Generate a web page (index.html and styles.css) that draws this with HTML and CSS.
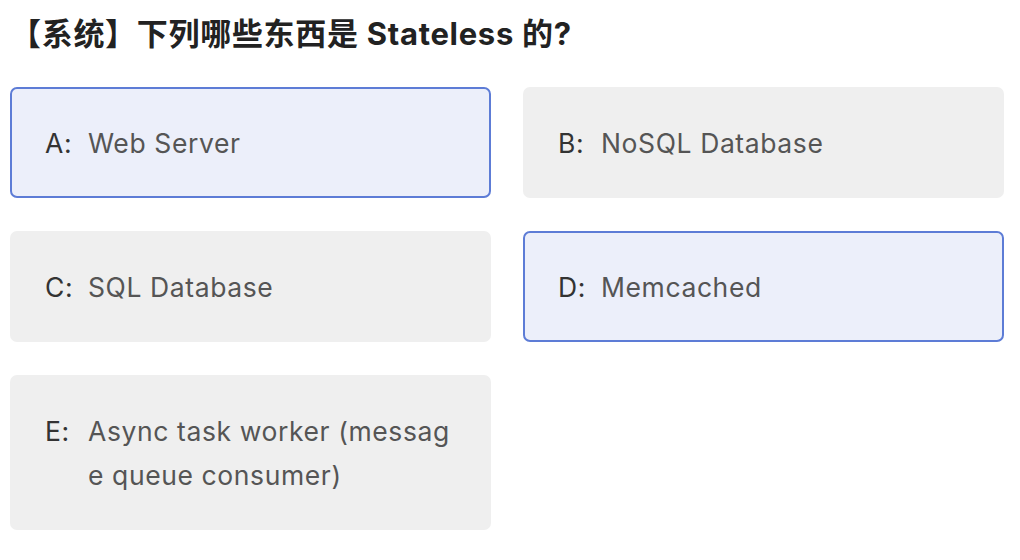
FILE: index.html
```html
<!DOCTYPE html>
<html lang="zh">
<head>
<meta charset="utf-8">
<link rel="stylesheet" href="styles.css">
</head>
<body>
<div class="page">
  <h1 class="title">【系统】下列哪些东西是 Stateless 的?</h1>
  <div class="options">
    <div class="option selected"><span class="label">A:</span><span class="text">Web Server</span></div>
    <div class="option"><span class="label">B:</span><span class="text">NoSQL Database</span></div>
    <div class="option"><span class="label">C:</span><span class="text">SQL Database</span></div>
    <div class="option selected"><span class="label">D:</span><span class="text">Memcached</span></div>
    <div class="option"><span class="label">E:</span><span class="text">Async task worker (message queue consumer)</span></div>
  </div>
</div>
</body>
</html>
```
FILE: styles.css
```css
html, body {
  margin: 0;
  padding: 0;
  background: #ffffff;
}
.page {
  padding: 9px 16px 0 10px;
  font-family: Inter, "Noto Sans CJK SC", sans-serif;
}
.title {
  margin: 0;
  font-size: 31px;
  letter-spacing: 0.7px;
  line-height: 50px;
  font-weight: 700;
  color: #222222;
}
.options {
  margin-top: 28px;
  display: grid;
  grid-template-columns: 481px 481px;
  column-gap: 32px;
  row-gap: 33px;
  align-items: start;
}
.option {
  display: flex;
  box-sizing: border-box;
  padding: 32px 35px 31px 33px;
  border: 2px solid transparent;
  border-radius: 7px;
  background: #efefef;
  font-size: 26.5px;
  letter-spacing: 0.6px;
  line-height: 44px;
}
.option.selected {
  background: #eceffa;
  border-color: #5d7cd6;
}
.label {
  flex: 0 0 43px;
  color: #333333;
}
.text {
  flex: 1;
  color: #555555;
  word-break: break-all;
}
```
